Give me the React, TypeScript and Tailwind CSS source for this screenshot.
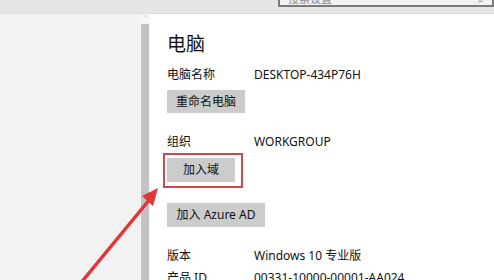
const font = { fontFamily: '"Noto Sans", "Noto Sans CJK SC", sans-serif' };

function InfoRow({ label, value, className = '' }: { label: string; value: string; className?: string }) {
  return (
    <div className={`flex h-5 items-center text-[12px] text-[#111] ${className}`}>
      <span className="w-[87px]">{label}</span>
      <span>{value}</span>
    </div>
  );
}

export default function App() {
  return (
    <div className="relative h-[280px] w-[494px] overflow-hidden bg-white" style={font}>
      {/* top bar with search box */}
      <div className="flex h-[14px] justify-end border-b border-[#dcdcdc] bg-[#e6e6e6]">
        <div className="ml-auto mt-[-20px] flex h-[27px] w-[216px] items-end border-2 border-[#7a7a7a] bg-[#f2f2f2] px-2 pb-[1px] text-[11px] leading-none text-[#888]">
          <span className="flex-1">搜索设置</span>
          <span className="text-[10px]">⌕</span>
        </div>
      </div>

      <div className="flex h-[266px]">
        <div className="w-[140px] bg-[#f2f2f2]" />

        {/* scrollbar */}
        <div className="flex w-[10px] flex-col items-center bg-[#f7f7f7]">
          <span className="mt-[1px] h-[8px] text-[8px] leading-[8px] text-[#999]">˄</span>
          <div className="mt-[1px] w-[8px] flex-1 bg-[#c2c2c2]" />
        </div>

        {/* content */}
        <div className="flex-1 pl-[17px] pt-[16px]">
          <h1 className="h-[28px] text-[19px] leading-[28px] text-[#111]">电脑</h1>
          <InfoRow label="电脑名称" value="DESKTOP-434P76H" className="mt-[7px]" />
          <button
            className="mt-[5px] flex h-[23px] w-[78px] items-center justify-center bg-[#cccccc] text-[12px] text-[#111]"
            type="button"
          >
            重命名电脑
          </button>

          <InfoRow label="组织" value="WORKGROUP" className="mt-[19px]" />
          <div className="relative mt-[6px] w-[68px]">
            <button
              className="flex h-[24px] w-[68px] items-center justify-center bg-[#cccccc] text-[12px] text-[#111]"
              type="button"
            >
              加入域
            </button>
            <span className="absolute left-[-4px] top-[-5px] h-[35px] w-[80px] border-2 border-[#d2474c]" />
          </div>

          <button
            className="mt-[21px] flex h-[24px] w-[98px] items-center justify-center bg-[#cccccc] text-[12px] text-[#111]"
            type="button"
          >
            加入 Azure AD
          </button>

          <InfoRow label="版本" value="Windows 10 专业版" className="mt-[19px]" />
          <InfoRow label="产品 ID" value="00331-10000-00001-AA024" className="mt-[2px]" />
        </div>
      </div>

      {/* annotation arrow */}
      <svg className="pointer-events-none absolute left-0 top-0" width="494" height="280" viewBox="0 0 494 280">
        <line x1="80" y1="284" x2="150" y2="199" stroke="#e2373a" strokeWidth="3.5" strokeLinecap="round" />
        <polygon points="158,188 142,196 153,206" fill="#e2373a" />
      </svg>
    </div>
  );
}
